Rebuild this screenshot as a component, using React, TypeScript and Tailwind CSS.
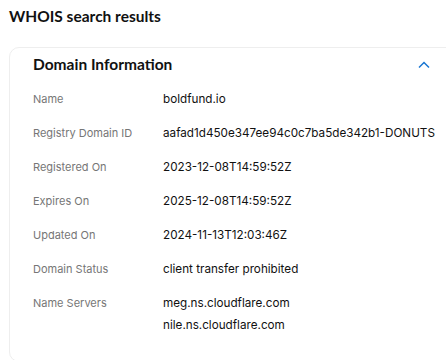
const rows: { label: string; values: string[] }[] = [
  { label: "Name", values: ["boldfund.io"] },
  { label: "Registry Domain ID", values: ["aafad1d450e347ee94c0c7ba5de342b1-DONUTS"] },
  { label: "Registered On", values: ["2023-12-08T14:59:52Z"] },
  { label: "Expires On", values: ["2025-12-08T14:59:52Z"] },
  { label: "Updated On", values: ["2024-11-13T12:03:46Z"] },
  { label: "Domain Status", values: ["client transfer prohibited"] },
  { label: "Name Servers", values: ["meg.ns.cloudflare.com", "nile.ns.cloudflare.com"] },
];

export default function App() {
  return (
    <div className="w-[446px] h-[360px] overflow-hidden bg-white font-['Inter',sans-serif] text-[#111111]">
      <h1 className="pl-[9px] pt-[6px] font-['Lato',sans-serif] text-[15.5px] leading-[20px] font-bold">
        WHOIS search results
      </h1>
      <div className="ml-[9px] mt-[21px] -mr-[20px] rounded-[10px] border border-[#eeeeee] pb-[28px]">
        <div className="flex items-center justify-between pl-[23px] pr-[35px] pt-[2px] h-[28px] mt-[2px]">
          <h2 className="font-['Lato',sans-serif] text-[15.5px] font-bold">Domain Information</h2>
          <svg width="12" height="8" viewBox="0 0 12 8" fill="none" className="mt-[0px]">
            <path d="M1 6.5L6 1.5L11 6.5" stroke="#1976d2" strokeWidth="1.5" />
          </svg>
        </div>
        <div className="pl-[23px] mt-[13px] flex flex-col gap-[18px] leading-[16px]">
          {rows.map((r) => (
            <div key={r.label} className="flex">
              <div className="w-[130px] text-[11px] text-[#767676]">{r.label}</div>
              <div className="flex flex-col gap-[6px] text-[11.7px]">
                {r.values.map((v) => (
                  <div key={v}>{v}</div>
                ))}
              </div>
            </div>
          ))}
        </div>
      </div>
    </div>
  );
}
